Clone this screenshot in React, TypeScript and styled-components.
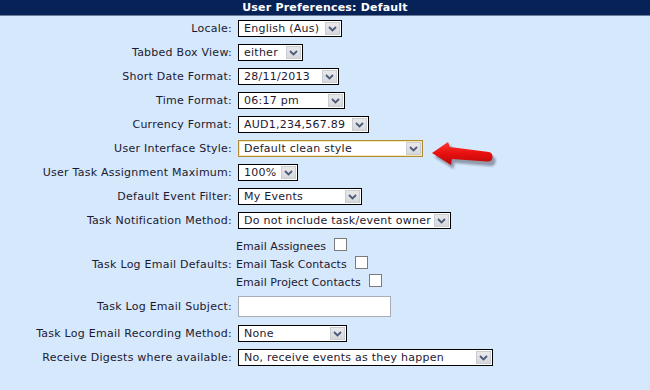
import React from "react";
import styled, { createGlobalStyle } from "styled-components";

const GlobalStyle = createGlobalStyle`
    html, body {
        margin: 0;
        padding: 0;
        background: #d5e8fc;
    }
    body {
        font-family: "DejaVu Sans", Verdana, sans-serif;
        font-size: 11px;
        letter-spacing: 0.25px;
        color: #1d1930;
    }
`;

const Page = styled.div`
    width: 650px;
    height: 390px;
    background: #d5e8fc;
    overflow: hidden;
`;

const Header = styled.div`
    height: 15px;
    line-height: 15px;
    background: #072257;
    border-bottom: 1px solid #6a7b98;
    color: #ffffff;
    font-weight: bold;
    font-size: 11px;
    letter-spacing: 0.2px;
    text-align: center;
`;

const Form = styled.div`
    position: relative;
    display: flex;
    flex-direction: column;
    padding-top: 4px;
`;

const Row = styled.div<{ $gap?: number; $height?: number }>`
    display: flex;
    align-items: center;
    margin-top: ${(p) => (p.$gap ?? 7)}px;
    min-height: ${(p) => (p.$height ?? 17)}px;
    &:first-child {
        margin-top: 0;
    }
`;

const Label = styled.div`
    width: 238px;
    padding-right: 6px;
    text-align: right;
    white-space: nowrap;
    box-sizing: border-box;
`;

const Select = styled.div<{ $w: number; $focus?: boolean }>`
    display: flex;
    align-items: center;
    width: ${(p) => p.$w}px;
    height: 17px;
    box-sizing: border-box;
    border: 1px solid ${(p) => (p.$focus ? "#b08a36" : "#000000")};
    box-shadow: ${(p) => (p.$focus ? "inset 0 0 0 1px #f6e7b4" : "none")};
    background: #ffffff;
    padding: 1px 1px 1px 5px;
`;

const Value = styled.span`
    flex: 1;
    white-space: nowrap;
    overflow: hidden;
    font-size: 11px;
    line-height: 13px;
`;

const DropButton = styled.span`
    display: flex;
    align-items: center;
    justify-content: center;
    width: 15px;
    height: 13px;
    box-sizing: border-box;
    border: 1px solid #c9ccd2;
    background: linear-gradient(#e9e9ea, #d7d8db);
    svg {
        display: block;
    }
`;

const CheckGroup = styled.div`
    display: flex;
    flex-direction: column;
    margin-left: -2px;
    letter-spacing: 0.05px;
`;

const CheckLine = styled.label`
    display: flex;
    align-items: center;
    height: 18px;
    white-space: nowrap;
`;

const Box = styled.span`
    display: inline-block;
    width: 13px;
    height: 13px;
    box-sizing: border-box;
    margin-left: 8px;
    margin-top: -3px;
    background: #ffffff;
    border: 1px solid #7b7b7b;
`;

const TextInput = styled.div`
    width: 153px;
    height: 21px;
    box-sizing: border-box;
    border: 1px solid #a6adb6;
    background: #ffffff;
`;

const Pointer = styled.svg`
    position: absolute;
    left: 428px;
    top: 122px;
`;

const Chevron = () => (
    <svg width="9" height="6" viewBox="0 0 9 6">
        <path d="M1 1 L4.5 4.5 L8 1" fill="none" stroke="#4c5a7c" strokeWidth="1.8" />
    </svg>
);

const Dropdown = ({ value, w, focus }: { value: string; w: number; focus?: boolean }) => (
    <Select $w={w} $focus={focus}>
        <Value>{value}</Value>
        <DropButton>
            <Chevron />
        </DropButton>
    </Select>
);

const selects: [string, string, number][] = [
    ["Locale:", "English (Aus)", 104],
    ["Tabbed Box View:", "either", 65],
    ["Short Date Format:", "28/11/2013", 101],
    ["Time Format:", "06:17 pm", 107],
    ["Currency Format:", "AUD1,234,567.89", 131],
    ["User Interface Style:", "Default clean style", 185],
    ["User Task Assignment Maximum:", "100%", 60],
    ["Default Event Filter:", "My Events", 124],
    ["Task Notification Method:", "Do not include task/event owner", 213],
];

const App = () => {
    return (
        <Page>
            <GlobalStyle />
            <Header>User Preferences: Default</Header>
            <Form>
                {selects.map(([label, value, w]) => (
                    <Row key={label}>
                        <Label>{label}</Label>
                        <Dropdown value={value} w={w} focus={label === "User Interface Style:"} />
                    </Row>
                ))}
                <Row $gap={8} $height={54}>
                    <Label>Task Log Email Defaults:</Label>
                    <CheckGroup>
                        <CheckLine>
                            Email Assignees
                            <Box />
                        </CheckLine>
                        <CheckLine>
                            Email Task Contacts
                            <Box />
                        </CheckLine>
                        <CheckLine>
                            Email Project Contacts
                            <Box />
                        </CheckLine>
                    </CheckGroup>
                </Row>
                <Row $gap={5} $height={21}>
                    <Label>Task Log Email Subject:</Label>
                    <TextInput />
                </Row>
                <Row $gap={8}>
                    <Label>Task Log Email Recording Method:</Label>
                    <Dropdown value="None" w={109} />
                </Row>
                <Row>
                    <Label>Receive Digests where available:</Label>
                    <Dropdown value="No, receive events as they happen" w={255} />
                </Row>
                <Pointer width="72" height="34" viewBox="0 0 72 34">
                    <defs>
                        <filter id="blur" x="-20%" y="-40%" width="140%" height="180%">
                            <feGaussianBlur stdDeviation="1.2" />
                        </filter>
                        <linearGradient id="red" x1="0" y1="0" x2="0" y2="1">
                            <stop offset="0" stopColor="#ff3a32" />
                            <stop offset="0.5" stopColor="#e8100f" />
                            <stop offset="1" stopColor="#b80808" />
                        </linearGradient>
                    </defs>
                    <path
                        d="M5 17 L21 5 L23 10 L62 16 Q67 17 66 22 Q65 27 60 26 L25 23 L24 29 Z"
                        fill="#5a5a6a"
                        opacity="0.55"
                        filter="url(#blur)"
                        transform="translate(1.5 2)"
                    />
                    <path
                        d="M4 15 L20 4 L22 9 L61 14 Q65 15 64.5 19.5 Q64 24 59 23.5 L24 21 L23 27 Z"
                        fill="url(#red)"
                    />
                </Pointer>
            </Form>
        </Page>
    );
};

export default App;
